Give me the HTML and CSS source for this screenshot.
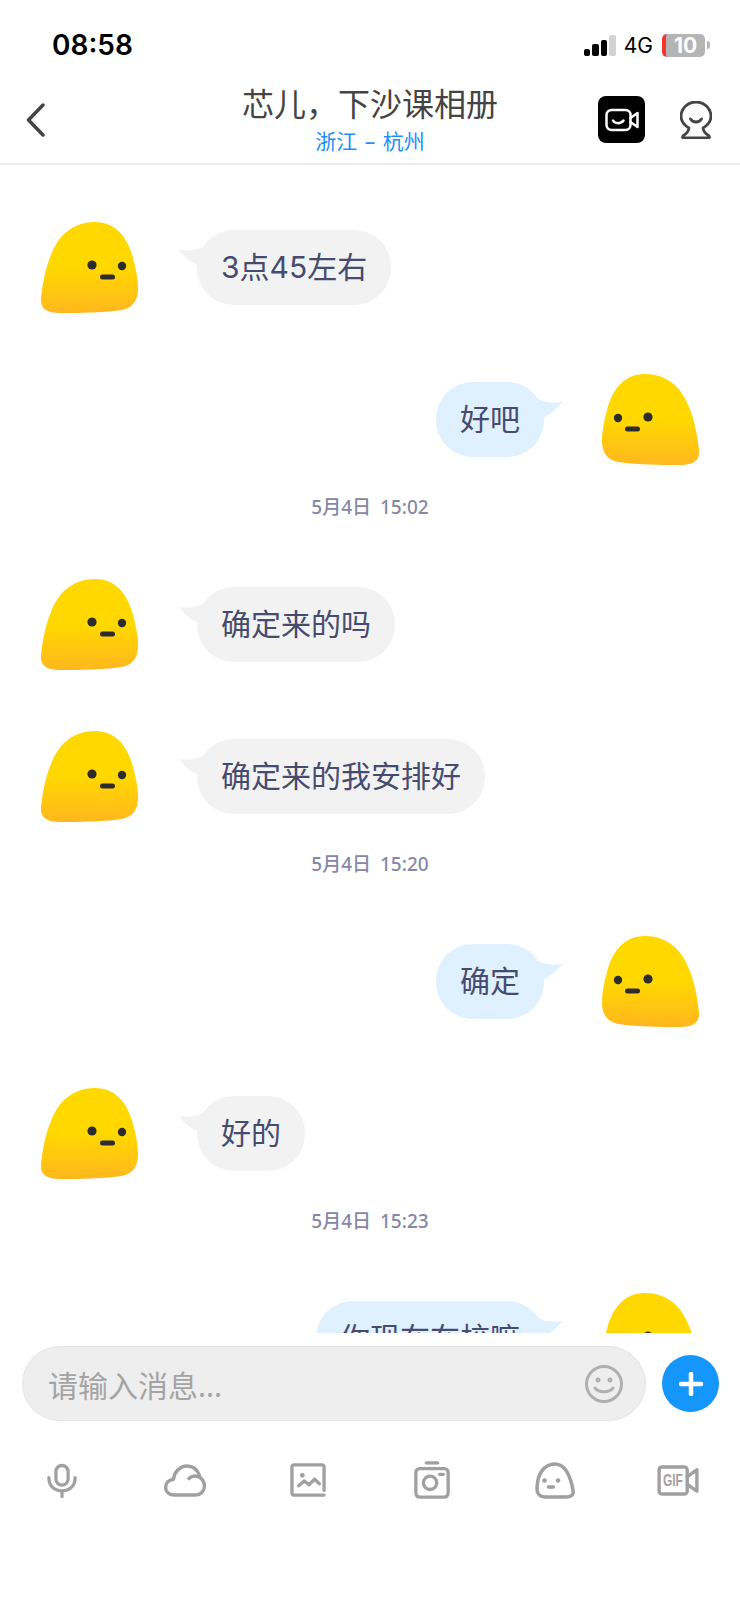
FILE: index.html
```html
<!DOCTYPE html>
<html>
  <head>
    <meta http-equiv="content-type" content="text/html; charset=UTF-8">
    <title>芯儿，下沙课相册</title>
    <link rel="stylesheet" href="styles.css">
  </head>
<body>
  <svg class="defs" width="0" height="0">
    <defs>
      <linearGradient id="blob-fill" x1="0" y1="0" x2="0" y2="1">
        <stop offset="0.5" stop-color="#ffd800"/>
        <stop offset="1" stop-color="#ffb71e"/>
      </linearGradient>
      <symbol id="blob" viewBox="0 0 98 92">
        <path fill="url(#blob-fill)" d="M55 0C76 0 88 16 93 36C96 47 98 57 98 66C98 81 91 87 78 88.500C62 90.500 40 91 20 91C6 91 0 86 1 76C3 58 6 45 11 33C19 12 34 0 55 0Z"/>
        <circle cx="52" cy="43" r="4.600" fill="#2c2c2c"/>
        <circle cx="82" cy="44" r="4.200" fill="#2c2c2c"/>
        <rect x="60" y="52.500" width="15" height="5" rx="2.500" fill="#2c2c2c"/>
      </symbol>
      <symbol id="tail" viewBox="0 0 34 24">
        <path d="M0 6C12 8 22 5 30 0L34 24L20 22C12 19 5 13 0 6Z"/>
      </symbol>
    </defs>
  </svg>

  <div class="status">
    <div class="clock">08:58</div>
    <div class="status-right">
      <div class="signal"><i class="b1"></i><i class="b2"></i><i class="b3"></i><i class="b4"></i></div>
      <span class="net">4G</span>
      <div class="battery">10</div>
      <div class="battery-cap"></div>
    </div>
  </div>

  <div class="nav">
    <svg class="back" width="22" height="34" viewBox="0 0 22 34"><path d="M18 2L3.500 17L18 32"/></svg>
    <div class="nav-title">
      <div class="title">芯儿，下沙课相册</div>
      <div class="place">浙江 – 杭州</div>
    </div>
    <div class="nav-actions">
      <div class="video-btn">
        <svg width="34" height="28" viewBox="0 0 34 28">
          <rect x="1.500" y="4" width="24" height="20" rx="5"/>
          <path d="M25.500 12L32.500 7V21L25.500 16"/>
          <path d="M8 14.500C10 18 16 18 18.500 14.500"/>
        </svg>
      </div>
      <svg class="cam-icon" width="32" height="38" viewBox="0 0 32 38">
        <path d="M9 27C4 24 1 20 1 15.500C1 7.500 7.500 1 16 1C24.500 1 31 7.500 31 15.500C31 20 28 24 23 27C23.500 30 26 33 28.500 34.500C30 36 29.500 37 28 37H4C2.500 37 2 36 3.500 34.500C6 33 8.500 30 9 27Z"/>
        <path d="M10.500 18C13 22 19 22 21.500 18"/>
      </svg>
    </div>
  </div>

  <div class="list">
    <div class="row">
      <svg class="avatar"><use href="#blob"/></svg>
      <div class="bubble"><svg class="tail"><use href="#tail"/></svg>3点45左右</div>
    </div>
    <div class="row me">
      <div class="bubble"><svg class="tail"><use href="#tail"/></svg>好吧</div>
      <svg class="avatar"><use href="#blob"/></svg>
    </div>
    <div class="time">5月4日 15:02</div>
    <div class="row">
      <svg class="avatar"><use href="#blob"/></svg>
      <div class="bubble"><svg class="tail"><use href="#tail"/></svg>确定来的吗</div>
    </div>
    <div class="row">
      <svg class="avatar"><use href="#blob"/></svg>
      <div class="bubble"><svg class="tail"><use href="#tail"/></svg>确定来的我安排好</div>
    </div>
    <div class="time">5月4日 15:20</div>
    <div class="row me">
      <div class="bubble"><svg class="tail"><use href="#tail"/></svg>确定</div>
      <svg class="avatar"><use href="#blob"/></svg>
    </div>
    <div class="row">
      <svg class="avatar"><use href="#blob"/></svg>
      <div class="bubble"><svg class="tail"><use href="#tail"/></svg>好的</div>
    </div>
    <div class="time">5月4日 15:23</div>
    <div class="row me">
      <div class="bubble"><svg class="tail"><use href="#tail"/></svg>你现在在校嘛</div>
      <svg class="avatar"><use href="#blob"/></svg>
    </div>
  </div>

  <div class="composer">
    <div class="input">
      <span class="placeholder">请输入消息...</span>
      <svg class="smile" width="38" height="38" viewBox="0 0 38 38">
        <circle cx="19" cy="19" r="17.500"/>
        <circle class="dot" cx="13" cy="15" r="2.500"/>
        <circle class="dot" cx="25" cy="15" r="2.500"/>
        <path d="M10 23C14 28 24 28 28 23"/>
      </svg>
    </div>
    <div class="plus">
      <svg width="24" height="24" viewBox="0 0 24 24"><path d="M2 12H22M12 2V22"/></svg>
    </div>
  </div>

  <div class="tools">
    <svg width="30" height="35" viewBox="0 0 32 36">
      <rect x="9.500" y="2" width="13" height="21" rx="6.500"/>
      <path d="M2 15C2 24 8 29 16 29C24 29 30 24 30 15M16 29V35"/>
    </svg>
    <svg width="44" height="33" viewBox="0 0 44 34">
      <path d="M11 32C5 32 2 28 2 24C2 19 6 16 10 16C11 8 17 2 24 2C31 2 35 6 37 12M26 15C29 12 33 12 36 13C40 15 42 19 42 23C42 28 38 32 33 32H11"/>
    </svg>
    <svg width="36" height="34" viewBox="0 0 38 36">
      <path d="M36 29V4C36 3 35 2 34 2H4C3 2 2 3 2 4V31C2 33 3 34 4 34H36"/>
      <circle class="dot" cx="13" cy="13" r="2.500"/>
      <path d="M9 24L15 19L20 23L26 17L31 22"/>
    </svg>
    <svg width="38" height="38" viewBox="0 0 38 40">
      <path d="M13 2H25"/>
      <rect x="2" y="8" width="34" height="30" rx="4"/>
      <circle cx="17" cy="23" r="7"/>
      <path d="M27 14H31"/>
    </svg>
    <svg width="41" height="37" viewBox="0 0 41 37">
      <path d="M20 2C30 2 35 12 38 28C39 33 36 35 31 35H10C5 35 2 32 2 27C2 12 9 2 20 2Z"/>
      <circle class="dot" cx="9.500" cy="18.500" r="2.300"/>
      <circle class="dot" cx="23" cy="18.500" r="2.300"/>
      <path d="M13.500 25H18.500"/>
    </svg>
    <div class="gif-tool">
      <svg width="43" height="31" viewBox="0 0 44 32">
        <rect x="2" y="2" width="29" height="28" rx="3"/>
        <path d="M31 12L41 5V27L31 20"/>
      </svg>
      <span class="gif-label">GIF</span>
    </div>
  </div>
</body>
</html>
```

FILE: styles.css
```css
html {
  background: white;
}

body {
  margin: 0;
  width: 740px;
  height: 1600px;
  overflow: hidden;
  font-family: "Noto Sans", "Noto Sans CJK SC", sans-serif;
  background: white;
}

.defs {
  display: block;
  height: 0;
}

/* status bar */
.status {
  height: 76px;
  padding: 14px 30px 0 52px;
  display: flex;
  align-items: center;
  justify-content: space-between;
  box-sizing: border-box;
}

.clock {
  font-family: Inter, sans-serif;
  font-size: 28px;
  font-weight: 600;
  color: #000;
}

.status-right {
  display: flex;
  align-items: center;
}

.signal {
  display: flex;
  align-items: flex-end;
  gap: 2px;
  height: 21px;
  margin-right: 8px;
}

.signal i {
  display: block;
  width: 6.500px;
  background: #000;
  border-radius: 2px;
}

.signal .b1 { height: 7px; }
.signal .b2 { height: 12px; }
.signal .b3 { height: 16px; }
.signal .b4 { height: 21px; background: #d2d2d2; }

.net {
  font-family: Inter, sans-serif;
  font-size: 21px;
  color: #000;
  margin-right: 9px;
}

.battery {
  width: 43px;
  height: 23px;
  box-sizing: border-box;
  border-radius: 5px;
  border-left: 4px solid #f8352d;
  background: #b5b5b5;
  color: white;
  font-family: Inter, sans-serif;
  font-size: 21px;
  font-weight: 700;
  line-height: 23px;
  text-align: center;
}

.battery-cap {
  width: 3px;
  height: 8px;
  margin-left: 2px;
  border-radius: 0 3px 3px 0;
  background: #b5b5b5;
}

/* nav */
.nav {
  height: 87px;
  position: relative;
  display: flex;
  align-items: center;
  justify-content: space-between;
  padding: 0 28px 0 25px;
  border-bottom: 2px solid #ececec;
}

.back path {
  fill: none;
  stroke: #444;
  stroke-width: 3.500;
  stroke-linecap: round;
  stroke-linejoin: round;
}

.nav-title {
  position: absolute;
  left: 0;
  right: 0;
  top: 6px;
  text-align: center;
}

.title {
  font-size: 32px;
  line-height: 44px;
  color: #444;
}

.place {
  font-size: 21px;
  line-height: 30px;
  word-spacing: 2px;
  color: #1d8ffb;
}

.nav-actions {
  display: flex;
  align-items: center;
  gap: 35px;
  position: relative;
}

.video-btn {
  width: 47px;
  height: 47px;
  border-radius: 8px;
  background: #000;
  display: flex;
  align-items: center;
  justify-content: center;
}

.video-btn svg {
  fill: none;
  stroke: white;
  stroke-width: 2.500;
  stroke-linecap: round;
  stroke-linejoin: round;
}

.cam-icon {
  fill: none;
  stroke: #444;
  stroke-width: 2.800;
  stroke-linecap: round;
  stroke-linejoin: round;
}

/* messages */
.list {
  height: 1168px;
  overflow: hidden;
  padding: 0 40px;
}

.row {
  display: flex;
  align-items: flex-start;
  margin-top: 60px;
}

.row:first-child {
  margin-top: 57px;
}

.row.me {
  justify-content: flex-end;
}

.avatar {
  width: 98px;
  height: 92px;
  flex: none;
  display: block;
}

.me .avatar {
  transform: scaleX(-1);
  margin-left: 58px;
}

.bubble {
  position: relative;
  height: 75px;
  margin-top: 8px;
  margin-left: 59px;
  padding: 0 24px;
  border-radius: 37px;
  background: #f2f2f3;
  fill: #f2f2f3;
  color: #474b6e;
  font-family: Inter, "Noto Sans CJK SC", sans-serif;
  font-size: 30px;
  line-height: 75px;
  white-space: nowrap;
}

.me .bubble {
  margin-left: 0;
  background: #dff0ff;
  fill: #dff0ff;
}

.tail {
  position: absolute;
  left: -18px;
  top: 14px;
  width: 34px;
  height: 24px;
}

.me .tail {
  left: auto;
  right: -18px;
  transform: scaleX(-1);
}

.time {
  margin-top: 29px;
  height: 24px;
  line-height: 24px;
  text-align: center;
  font-size: 19px;
  font-weight: 500;
  word-spacing: 4px;
  color: #8488a6;
}

/* input */
.composer {
  display: flex;
  align-items: center;
  padding: 13px 0 0 22px;
}

.input {
  width: 624px;
  height: 75px;
  box-sizing: border-box;
  border: 1px solid #e5e5e5;
  border-radius: 38px;
  background: #eeeeee;
  display: flex;
  align-items: center;
  justify-content: space-between;
  padding: 0 22px 0 25px;
}

.placeholder {
  font-size: 30px;
  color: #a4a4a4;
}

.smile {
  fill: none;
  stroke: #b0b0b0;
  stroke-width: 3;
  stroke-linecap: round;
}

.smile .dot {
  fill: #b0b0b0;
  stroke: none;
}

.plus {
  width: 57px;
  height: 57px;
  margin-left: 16px;
  border-radius: 50%;
  background: #1596fb;
  display: flex;
  align-items: center;
  justify-content: center;
}

.plus svg {
  stroke: white;
  stroke-width: 4.500;
  stroke-linecap: round;
}

/* tool row */
.tools {
  display: grid;
  grid-template-columns: repeat(6, 123.400px);
  justify-items: center;
  align-items: center;
  margin-top: 40px;
}

.tools svg {
  display: block;
  fill: none;
  stroke: #a0a0a0;
  stroke-width: 3.500;
  stroke-linecap: round;
  stroke-linejoin: round;
}

.tools .dot {
  fill: #a0a0a0;
  stroke: none;
}

.gif-tool {
  position: relative;
}

.gif-label {
  position: absolute;
  left: 6px;
  top: 6px;
  font-family: "Liberation Sans", sans-serif;
  font-size: 17px;
  line-height: 20px;
  font-weight: 700;
  color: #a0a0a0;
  transform: scaleX(0.700);
  transform-origin: left center;
}
```
